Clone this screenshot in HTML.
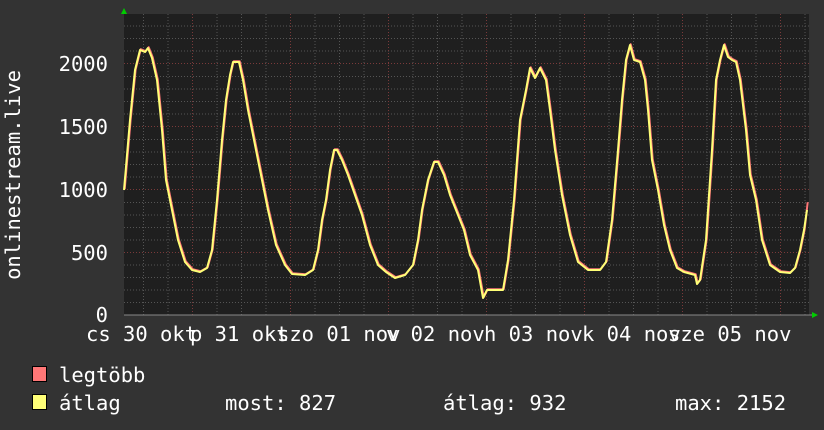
<!DOCTYPE html><html><head><style>html,body{margin:0;padding:0;background:#333;width:824px;height:430px;overflow:hidden}</style></head><body>
<svg width="824" height="430" xmlns="http://www.w3.org/2000/svg" font-family="'DejaVu Sans Mono','Liberation Mono',monospace" font-size="20.5" fill="#fff">
<rect width="824" height="430" fill="#333"/>
<rect x="124" y="14" width="685" height="301" fill="#1f1f1f"/>
<g stroke="#555" stroke-dasharray="1,2" stroke-width="1">
<path d="M124 302.5H809M124 290H809M124 277.5H809M124 265H809M124 240H809M124 227.5H809M124 215H809M124 202.5H809M124 177H809M124 164.5H809M124 152H809M124 139.5H809M124 114H809M124 101.5H809M124 89H809M124 76.5H809M124 51H809M124 38.5H809M124 26H809"/>
<path d="M143.5 14V315M168 14V315M217 14V315M241.5 14V315M266 14V315M315 14V315M339.5 14V315M364 14V315M413 14V315M437.5 14V315M462 14V315M511 14V315M535.5 14V315M560 14V315M609 14V315M633.5 14V315M658 14V315M707 14V315M731.5 14V315M756 14V315M805 14V315"/>
</g>
<g stroke="#7a3a3a" stroke-dasharray="1,2" stroke-width="1">
<path d="M124 252.5H809M124 189.5H809M124 126.5H809M124 63.5H809M192.5 14V315M290.5 14V315M388.5 14V315M486.5 14V315M584.5 14V315M682.5 14V315M780.5 14V315"/>
</g>
<line x1="124" y1="315" x2="812" y2="315" stroke="#888"/>
<polygon points="121,14 127,14 124,8" fill="#0c0"/>
<polygon points="812,312 812,318 818,315" fill="#0c0"/>
<g fill="none" stroke-width="2" stroke-linejoin="round">
<polyline stroke="#ff7777" transform="translate(0.7,-0.8)" points="124,190 130,120 135,70 140,50 145,52 148,48 152,58 157,80 162,130 166,180 172,210 178,240 185,262 192,270 200,272 207,268 212,250 217,200 222,140 226,100 230,75 233,62 239,62 243,80 248,110 256,150 263,185 268,210 276,245 285,265 292,274 305,275 313,270 318,250 322,220 326,200 330,170 334,150 337,150 342,160 348,175 355,195 362,215 370,245 378,265 386,272 395,278 405,275 413,265 418,240 422,210 428,180 434,162 438,162 444,175 450,195 458,215 464,230 470,255 478,270 483,298 487,290 495,290 503,290 508,260 514,200 520,120 526,90 530,68 535,78 540,68 546,80 550,110 555,150 562,195 570,235 578,262 588,270 600,270 606,262 612,220 618,150 622,100 626,60 630,45 634,60 640,62 645,80 648,110 652,160 658,190 664,225 670,250 677,268 684,272 695,275 697,284 700,280 706,240 712,150 716,80 720,60 724,45 728,57 732,60 736,62 740,80 746,130 750,175 756,200 762,240 770,265 780,272 790,273 795,268 800,250 804,230 807,203"/>
<polyline stroke="#ffff77" points="124,190 130,120 135,70 140,50 145,52 148,48 152,58 157,80 162,130 166,180 172,210 178,240 185,262 192,270 200,272 207,268 212,250 217,200 222,140 226,100 230,75 233,62 239,62 243,80 248,110 256,150 263,185 268,210 276,245 285,265 292,274 305,275 313,270 318,250 322,220 326,200 330,170 334,150 337,150 342,160 348,175 355,195 362,215 370,245 378,265 386,272 395,278 405,275 413,265 418,240 422,210 428,180 434,162 438,162 444,175 450,195 458,215 464,230 470,255 478,270 483,298 487,290 495,290 503,290 508,260 514,200 520,120 526,90 530,68 535,78 540,68 546,80 550,110 555,150 562,195 570,235 578,262 588,270 600,270 606,262 612,220 618,150 622,100 626,60 630,45 634,60 640,62 645,80 648,110 652,160 658,190 664,225 670,250 677,268 684,272 695,275 697,284 700,280 706,240 712,150 716,80 720,60 724,45 728,57 732,60 736,62 740,80 746,130 750,175 756,200 762,240 770,265 780,272 790,273 795,268 800,250 804,230 807,210"/>
</g>
<g text-anchor="end">
<text x="108" y="71">2000</text><text x="108" y="134">1500</text><text x="108" y="197">1000</text><text x="108" y="260">500</text><text x="108" y="322">0</text>
</g>
<text transform="translate(20,175) rotate(-90)" text-anchor="middle">onlinestream.live</text>
<g>
<text x="86" y="341">cs 30 okt</text>
<text x="190" y="341">p 31 okt</text>
<text x="277" y="341">szo 01 nov</text>
<text x="386" y="341">v 02 nov</text>
<text x="484" y="341">h 03 nov</text>
<text x="582" y="341">k 04 nov</text>
<text x="668" y="341">sze 05 nov</text>
</g>
<rect x="32.5" y="366.5" width="14" height="15" fill="#ff7777" stroke="#000"/>
<rect x="32.5" y="394.5" width="14" height="15" fill="#ffff77" stroke="#000"/>
<text x="59" y="382">legtöbb</text>
<text x="59" y="410">átlag</text>
<text x="225" y="410">most: 827</text>
<text x="443" y="410">átlag: 932</text>
<text x="675" y="410">max: 2152</text>
</svg>
</body></html>
